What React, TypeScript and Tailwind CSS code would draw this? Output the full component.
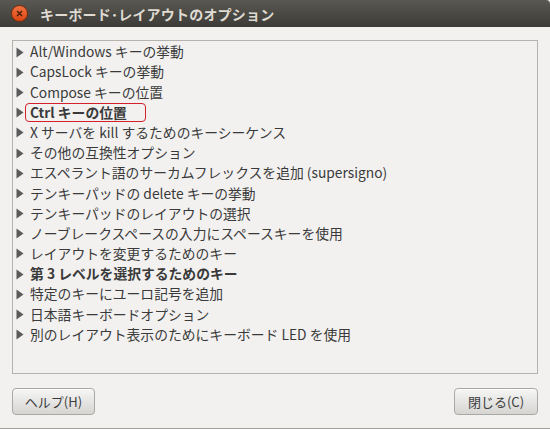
import React from "react";

const items: { label: string; bold?: boolean; boxed?: boolean }[] = [
  { label: "Alt/Windows キーの挙動" },
  { label: "CapsLock キーの挙動" },
  { label: "Compose キーの位置" },
  { label: "Ctrl キーの位置", bold: true, boxed: true },
  { label: "X サーバを kill するためのキーシーケンス" },
  { label: "その他の互換性オプション" },
  { label: "エスペラント語のサーカムフレックスを追加 (supersigno)" },
  { label: "テンキーパッドの delete キーの挙動" },
  { label: "テンキーパッドのレイアウトの選択" },
  { label: "ノーブレークスペースの入力にスペースキーを使用" },
  { label: "レイアウトを変更するためのキー" },
  { label: "第 3 レベルを選択するためのキー", bold: true },
  { label: "特定のキーにユーロ記号を追加" },
  { label: "日本語キーボードオプション" },
  { label: "別のレイアウト表示のためにキーボード LED を使用" },
];

function Arrow() {
  return (
    <svg width="8" height="11" viewBox="0 0 8 11" className="shrink-0">
      <path d="M0.5 0.5 L7.5 5.5 L0.5 10.5 Z" fill="#5a5a5a" />
    </svg>
  );
}

export default function App() {
  return (
    <div
      className="w-[550px] h-[429px] bg-[#f2f1f0] flex flex-col overflow-hidden"
      style={{ fontFamily: '"Noto Sans CJK JP", "Noto Sans", sans-serif' }}
    >
      <div className="h-[27px] shrink-0 bg-gradient-to-b from-[#5a5852] to-[#3c3b37] flex items-center pl-[11px] rounded-tr-[4px]">
        <div className="w-[17px] h-[17px] rounded-full bg-gradient-to-b from-[#f0723f] to-[#d9460f] border border-[#7a2a0a] flex items-center justify-center">
          <svg width="7" height="7" viewBox="0 0 7 7">
            <path d="M1 1 L6 6 M6 1 L1 6" stroke="#4a1a05" strokeWidth="1.4" />
          </svg>
        </div>
        <div className="ml-[12px] text-[14px] font-bold text-[#dfdbd2] leading-none tracking-[0.2px]">
          キーボード･レイアウトのオプション
        </div>
      </div>
      <div className="flex-1 flex flex-col px-[12px] pt-[13px]">
        <div className="h-[334px] border border-[#b6b3ae] bg-[#f2f1f0] flex flex-col pt-[1px]">
          {items.map((it, i) => (
            <div key={i} className="h-[20.2px] flex items-center pl-[3px] gap-[6px] shrink-0">
              <Arrow />
              <div
                className={
                  "text-[13.8px] leading-none text-[#3a3a3a] whitespace-nowrap " +
                  (it.bold ? "font-bold " : "") +
                  (it.boxed
                    ? "border border-[#d3202a] rounded-[4px] h-[19px] flex items-center pl-[4px] pr-[18px] -ml-[5px]"
                    : "")
                }
              >
                {it.label}
              </div>
            </div>
          ))}
        </div>
        <div className="flex justify-between mt-[14px]">
          <button className="w-[83px] h-[27px] rounded-[4px] border border-[#a8a8a5] bg-gradient-to-b from-[#f6f6f5] to-[#d6d5d2] text-[13px] text-[#3c3c3c] flex items-center justify-center shadow-[inset_0_1px_0_#ffffff]">
            ヘルプ(H)
          </button>
          <button className="w-[84px] h-[27px] rounded-[4px] border border-[#a8a8a5] bg-gradient-to-b from-[#f6f6f5] to-[#d6d5d2] text-[13px] text-[#3c3c3c] flex items-center justify-center shadow-[inset_0_1px_0_#ffffff]">
            閉じる(C)
          </button>
        </div>
      </div>
      <div className="h-[1px] bg-[#a3a19d] shrink-0" />
    </div>
  );
}
